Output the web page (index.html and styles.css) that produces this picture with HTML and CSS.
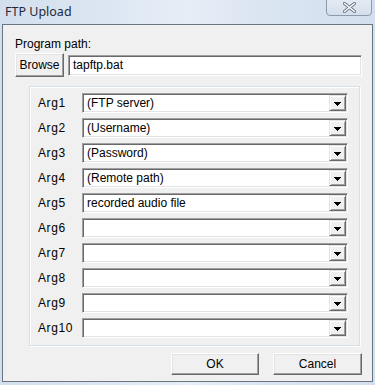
FILE: index.html
```html
<!DOCTYPE html>
<html lang="en">

<head>
    <meta charset="UTF-8">
    <title>FTP Upload</title>
    <link rel="stylesheet" href="styles.css">
</head>

<body>
    <div class="window">
        <div class="titlebar">
            <span class="title">FTP Upload</span>
            <div class="close-btn">
                <svg width="13" height="11" viewBox="0 0 13 11">
                    <path d="M1.5 1.5 L11.5 9.5 M11.5 1.5 L1.5 9.5" stroke="#6b7683" stroke-width="3.2" stroke-linecap="round"/>
                    <path d="M1.5 1.5 L11.5 9.5 M11.5 1.5 L1.5 9.5" stroke="#ffffff" stroke-width="1.4" stroke-linecap="round"/>
                </svg>
            </div>
        </div>
        <div class="client">
            <div class="path-label">Program path:</div>
            <div class="path-row">
                <button class="btn browse-btn">Browse</button>
                <div class="field path-field">tapftp.bat</div>
            </div>
            <div class="groupbox">
                <div class="arg-row"><span class="arg-label">Arg1</span><div class="combo"><span class="combo-text">(FTP server)</span><span class="drop"></span></div></div>
                <div class="arg-row"><span class="arg-label">Arg2</span><div class="combo"><span class="combo-text">(Username)</span><span class="drop"></span></div></div>
                <div class="arg-row"><span class="arg-label">Arg3</span><div class="combo"><span class="combo-text">(Password)</span><span class="drop"></span></div></div>
                <div class="arg-row"><span class="arg-label">Arg4</span><div class="combo"><span class="combo-text">(Remote path)</span><span class="drop"></span></div></div>
                <div class="arg-row"><span class="arg-label">Arg5</span><div class="combo"><span class="combo-text">recorded audio file</span><span class="drop"></span></div></div>
                <div class="arg-row"><span class="arg-label">Arg6</span><div class="combo"><span class="combo-text"></span><span class="drop"></span></div></div>
                <div class="arg-row"><span class="arg-label">Arg7</span><div class="combo"><span class="combo-text"></span><span class="drop"></span></div></div>
                <div class="arg-row"><span class="arg-label">Arg8</span><div class="combo"><span class="combo-text"></span><span class="drop"></span></div></div>
                <div class="arg-row"><span class="arg-label">Arg9</span><div class="combo"><span class="combo-text"></span><span class="drop"></span></div></div>
                <div class="arg-row"><span class="arg-label">Arg10</span><div class="combo"><span class="combo-text"></span><span class="drop"></span></div></div>
            </div>
            <div class="actions">
                <button class="btn action-btn">OK</button>
                <button class="btn action-btn cancel-btn">Cancel</button>
            </div>
        </div>
    </div>
</body>

</html>
```

FILE: styles.css
```css
* {
    margin: 0;
    padding: 0;
    box-sizing: border-box;
}

body {
    width: 375px;
    height: 385px;
    overflow: hidden;
    font-family: 'Liberation Sans', Arial, sans-serif;
    font-size: 12px;
    color: #000;
}

.window {
    width: 375px;
    height: 385px;
    padding: 0 2px 3px 2px;
    background: linear-gradient(90deg, #d3dfee 0%, #dde7f3 30%, #e6edf6 50%, #dbe5f2 70%, #d3dfee 100%);
    display: flex;
    flex-direction: column;
}

.titlebar {
    height: 24px;
    position: relative;
    display: flex;
    align-items: center;
}

.title {
    font-family: 'Noto Sans', 'Liberation Sans', sans-serif;
    font-size: 12.5px;
    color: #1e2a3a;
    padding-left: 3px;
    margin-top: -2px;
}

.close-btn {
    position: absolute;
    top: -1px;
    right: 1px;
    width: 46px;
    height: 17px;
    border: 1px solid #8d9aab;
    border-radius: 0 0 4px 4px;
    background: linear-gradient(#e3eaf3, #d5dfeb);
    display: flex;
    align-items: center;
    justify-content: center;
}

.client {
    flex: 1;
    background: #f0f0f0;
    border: 1px solid #6a7582;
    padding: 0 10px 0 12px;
    display: flex;
    flex-direction: column;
}

.path-label {
    margin-top: 11px;
    height: 16px;
    line-height: 16px;
}

.path-row {
    display: flex;
    align-items: center;
    gap: 4px;
    margin-top: 1px;
}

.btn {
    font-family: 'Liberation Sans', Arial, sans-serif;
    font-size: 12px;
    color: #000;
    background: #f0f0f0;
    border: 1px solid;
    border-color: #fff #696969 #696969 #fff;
    box-shadow: inset -1px -1px 0 #a0a0a0, inset 1px 1px 0 #e3e3e3;
}

.browse-btn {
    width: 49px;
    height: 24px;
}

.field {
    background: #fff;
    border: 1px solid;
    border-color: #a0a0a0 #fff #fff #a0a0a0;
    box-shadow: inset 1px 1px 0 #696969, inset -1px -1px 0 #e3e3e3;
}

.path-field {
    width: 294px;
    height: 21px;
    line-height: 19px;
    padding-left: 4px;
}

.groupbox {
    margin: 9px 0 0 14px;
    width: 331px;
    height: 260px;
    border: 1px solid #d5dfe5;
    box-shadow: inset 1px 1px 0 #fff, 1px 1px 0 #fff;
    padding: 6px 0 0 8px;
    display: flex;
    flex-direction: column;
    gap: 5px;
}

.arg-row {
    display: flex;
    align-items: center;
    height: 20px;
}

.arg-label {
    width: 44px;
    letter-spacing: 0.6px;
}

.combo {
    width: 266px;
    height: 20px;
    display: flex;
    background: #fff;
    border: 1px solid;
    border-color: #a0a0a0 #fff #fff #a0a0a0;
    box-shadow: inset 1px 1px 0 #696969, inset -1px -1px 0 #e3e3e3;
    padding: 1px;
}

.combo-text {
    flex: 1;
    line-height: 16px;
    padding-left: 3px;
}

.drop {
    width: 17px;
    height: 16px;
    background: #f0f0f0;
    border: 1px solid;
    border-color: #e3e3e3 #696969 #696969 #e3e3e3;
    box-shadow: inset 1px 1px 0 #fff, inset -1px -1px 0 #a0a0a0;
    display: flex;
    align-items: center;
    justify-content: center;
}

/* pixel arrow, row by row */
.drop::after {
    content: '';
    width: 7px;
    height: 4px;
    margin-top: 1px;
    background:
        linear-gradient(#000, #000) 0 0 / 7px 1px no-repeat,
        linear-gradient(#000, #000) 1px 1px / 5px 1px no-repeat,
        linear-gradient(#000, #000) 2px 2px / 3px 1px no-repeat,
        linear-gradient(#000, #000) 3px 3px / 1px 1px no-repeat;
}

.actions {
    display: flex;
    justify-content: flex-end;
    gap: 14px;
    margin-top: 7px;
}

.action-btn {
    width: 88px;
    height: 22px;
}

.cancel-btn {
    width: 89px;
}
```
